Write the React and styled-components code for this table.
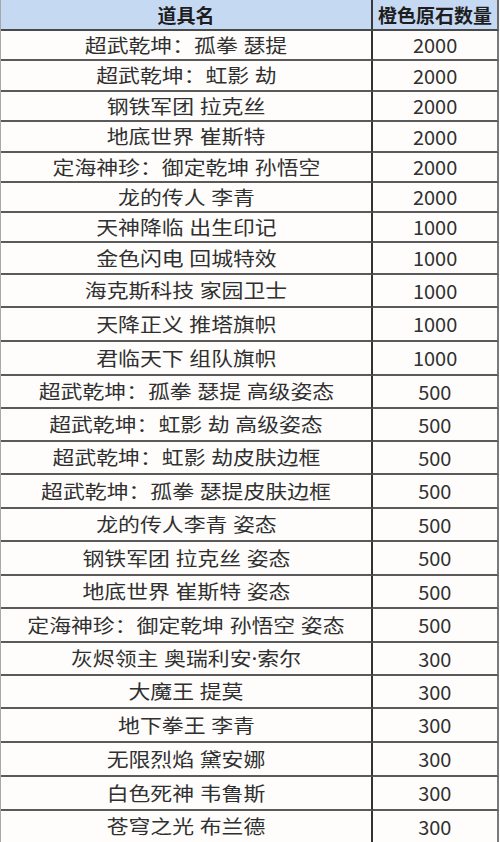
import React from "react";
import styled, { createGlobalStyle } from "styled-components";

const items = [
  { name: "超武乾坤：孤拳 瑟提", price: 2000, h: 30 },
  { name: "超武乾坤：虹影 劫", price: 2000, h: 31 },
  { name: "钢铁军团 拉克丝", price: 2000, h: 30 },
  { name: "地底世界 崔斯特", price: 2000, h: 31 },
  { name: "定海神珍：御定乾坤 孙悟空", price: 2000, h: 30 },
  { name: "龙的传人 李青", price: 2000, h: 30 },
  { name: "天神降临 出生印记", price: 1000, h: 30 },
  { name: "金色闪电 回城特效", price: 1000, h: 32 },
  { name: "海克斯科技 家园卫士", price: 1000, h: 33 },
  { name: "天降正义 推塔旗帜", price: 1000, h: 34 },
  { name: "君临天下 组队旗帜", price: 1000, h: 34 },
  { name: "超武乾坤：孤拳 瑟提 高级姿态", price: 500, h: 33 },
  { name: "超武乾坤：虹影 劫 高级姿态", price: 500, h: 33 },
  { name: "超武乾坤：虹影 劫皮肤边框", price: 500, h: 33 },
  { name: "超武乾坤：孤拳 瑟提皮肤边框", price: 500, h: 34 },
  { name: "龙的传人李青 姿态", price: 500, h: 33 },
  { name: "钢铁军团 拉克丝 姿态", price: 500, h: 34 },
  { name: "地底世界 崔斯特 姿态", price: 500, h: 33 },
  { name: "定海神珍：御定乾坤 孙悟空 姿态", price: 500, h: 34 },
  { name: "灰烬领主 奥瑞利安·索尔", price: 300, h: 33 },
  { name: "大魔王 提莫", price: 300, h: 33 },
  { name: "地下拳王 李青", price: 300, h: 34 },
  { name: "无限烈焰 黛安娜", price: 300, h: 34 },
  { name: "白色死神 韦鲁斯", price: 300, h: 34 },
  { name: "苍穹之光 布兰德", price: 300, h: 33 },
];

const App = () => {
  return (
    <>
      <GlobalStyle />
      <Table>
        <HeadCell>道具名</HeadCell>
        <HeadCell last>橙色原石数量</HeadCell>
        {items.map((item) => (
          <React.Fragment key={item.name}>
            <Cell $h={item.h}>
              <Label $stretch={1.15} $latin>
                {item.name}
              </Label>
            </Cell>
            <Cell $h={item.h} last>
              <Label $stretch={1.05}>{item.price}</Label>
            </Cell>
          </React.Fragment>
        ))}
      </Table>
    </>
  );
};

const GlobalStyle = createGlobalStyle`
  html, body {
    margin: 0;
    padding: 0;
    background: #fdfdfb;
    overflow: hidden;
  }
`;
const Table = styled.div`
  display: grid;
  grid-template-columns: 372px 126px;
  width: 498px;
  border-left: 1px solid #a8a8a8;
  box-sizing: border-box;
  font-family: "Noto Sans CJK SC", "Noto Sans", sans-serif;
  color: #303030;
`;
const HeadCell = styled.div`
  height: 31px;
  box-sizing: border-box;
  display: flex;
  align-items: center;
  justify-content: center;
  background: #c6d9f3;
  border-bottom: 2px solid #4a4a4a;
  border-right: 2px solid ${(props) => (props.last ? "#6a6a6a" : "#3a3a3a")};
  font-size: 19px;
  font-weight: 700;
  color: #1e1e1e;
  white-space: nowrap;
`;
const Cell = styled.div`
  height: ${(props) => props.$h}px;
  box-sizing: border-box;
  display: flex;
  align-items: center;
  justify-content: center;
  background: #fefdfb;
  border-bottom: 2px solid #5a5a5a;
  border-right: 2px solid ${(props) => (props.last ? "#7a7a7a" : "#333")};
  white-space: nowrap;
  padding-bottom: 1px;
`;
const Label = styled.span`
  display: inline-block;
  font-size: 19px;
  font-family: ${(props) =>
    props.$latin
      ? `"Noto Sans", "Noto Sans CJK SC", sans-serif`
      : `"Noto Sans CJK SC", "Noto Sans", sans-serif`};
  transform: scaleX(${(props) => props.$stretch});
`;

export default App;
